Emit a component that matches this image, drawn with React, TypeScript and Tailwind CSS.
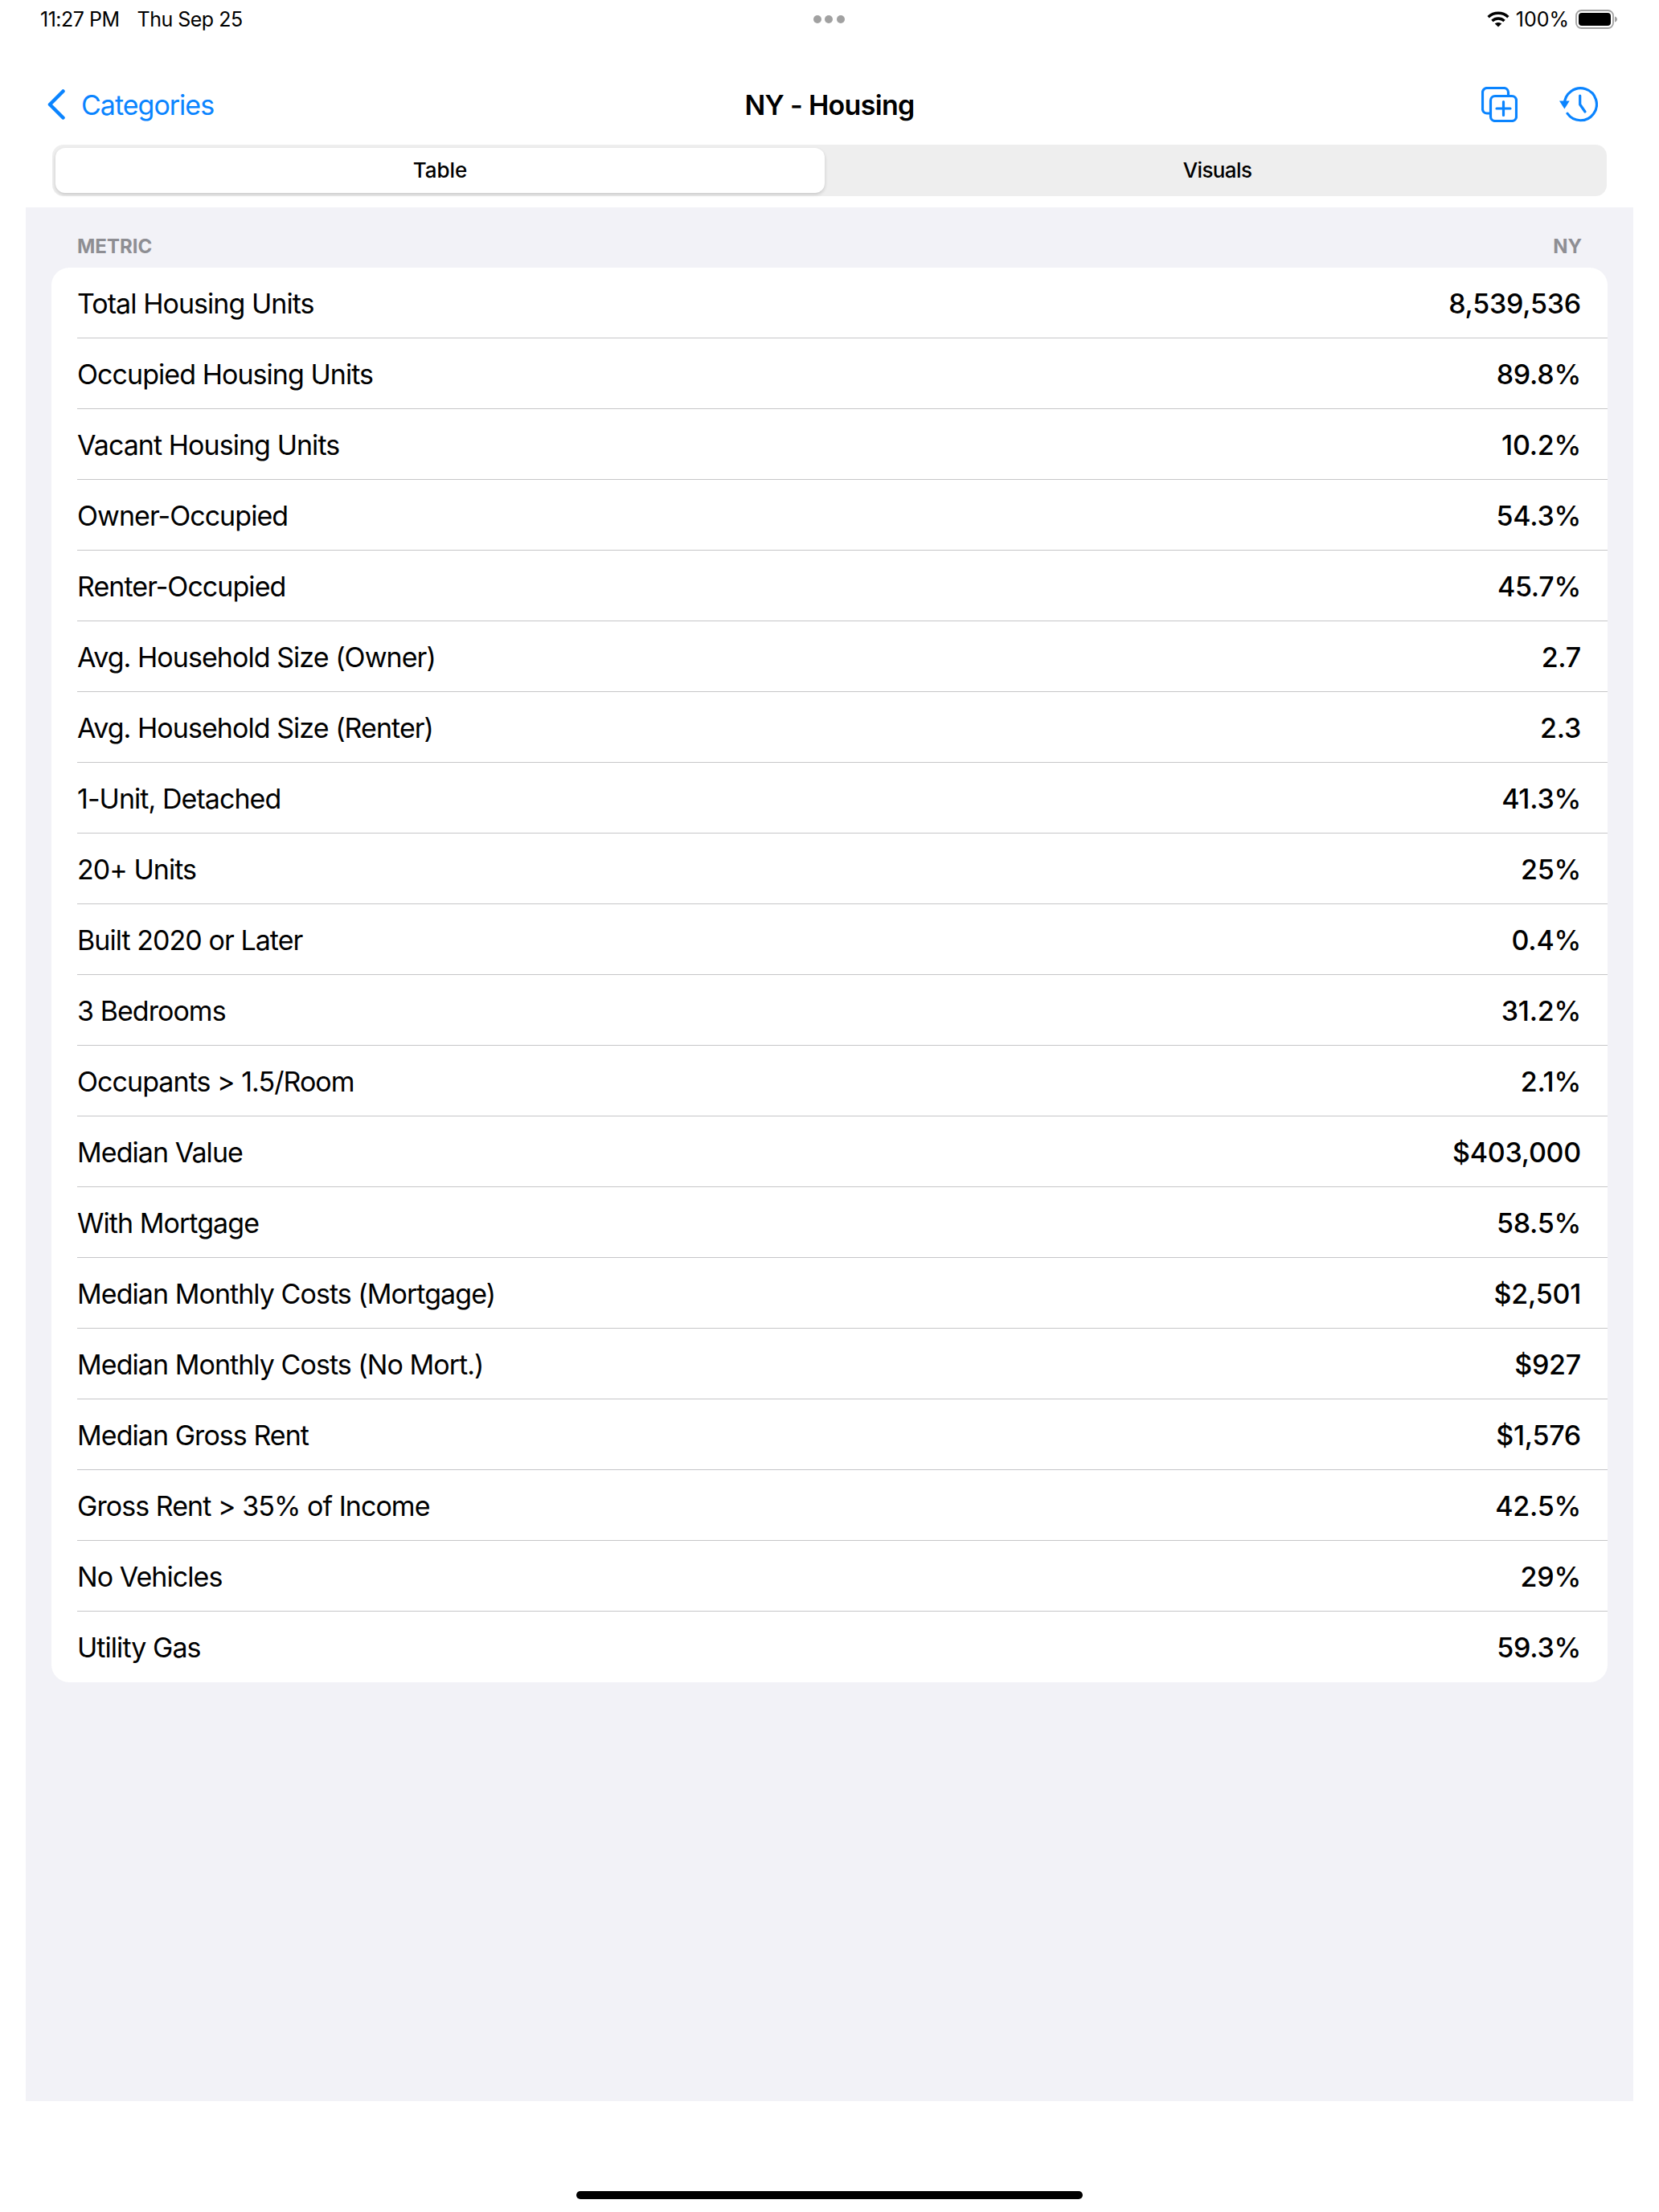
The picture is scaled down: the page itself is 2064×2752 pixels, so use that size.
const rows: [string, string][] = [
  ["Total Housing Units", "8,539,536"],
  ["Occupied Housing Units", "89.8%"],
  ["Vacant Housing Units", "10.2%"],
  ["Owner-Occupied", "54.3%"],
  ["Renter-Occupied", "45.7%"],
  ["Avg. Household Size (Owner)", "2.7"],
  ["Avg. Household Size (Renter)", "2.3"],
  ["1-Unit, Detached", "41.3%"],
  ["20+ Units", "25%"],
  ["Built 2020 or Later", "0.4%"],
  ["3 Bedrooms", "31.2%"],
  ["Occupants > 1.5/Room", "2.1%"],
  ["Median Value", "$403,000"],
  ["With Mortgage", "58.5%"],
  ["Median Monthly Costs (Mortgage)", "$2,501"],
  ["Median Monthly Costs (No Mort.)", "$927"],
  ["Median Gross Rent", "$1,576"],
  ["Gross Rent > 35% of Income", "42.5%"],
  ["No Vehicles", "29%"],
  ["Utility Gas", "59.3%"],
];

function Wifi() {
  return (
    <svg width="28" height="20" viewBox="0 0 28 20" fill="none" stroke="#000" strokeWidth="3.4">
      <path d="M1.6 7.2C8.6 .6 19.4 .6 26.4 7.2" />
      <path d="M6.4 12C10.8 8 17.2 8 21.6 12" />
      <path d="M14 19.6 L9.8 15.4 C12.2 13.4 15.8 13.4 18.2 15.4 Z" fill="#000" stroke="none" />
    </svg>
  );
}

function Battery() {
  return (
    <svg width="52" height="24" viewBox="0 0 52 24">
      <rect x="1" y="1" width="46" height="22" rx="6.5" fill="none" stroke="#a1a1a1" strokeWidth="1.8" />
      <rect x="4" y="4" width="40" height="16" rx="4" fill="#000" />
      <path d="M49 8.5c2 .6 3 2 3 3.5s-1 2.900-3 3.500z" fill="#a1a1a1" />
    </svg>
  );
}

function CopyPlus() {
  return (
    <svg width="45" height="44" viewBox="0 0 45 44" fill="none" stroke="#0a84ff" strokeWidth="3.2" strokeLinecap="round">
      <path d="M11 33H7a5.500 5.500 0 0 1-5.500-5.500V7A5.500 5.500 0 0 1 7 1.500h21A5.500 5.500 0 0 1 33.500 7v4" />
      <rect x="11.500" y="11.500" width="32" height="31" rx="5.500" />
      <path d="M27.500 18.500v17M19 27h17" />
    </svg>
  );
}

function History() {
  return (
    <svg width="48" height="44" viewBox="0 0 48 44" fill="none" stroke="#0a84ff" strokeWidth="3.2" strokeLinecap="round" strokeLinejoin="round">
      <path d="M6.400 21.700A20 20 0 1 1 10 33.200" />
      <path d="M0 17.500H12.700L6.400 27.500Z" fill="#0a84ff" stroke="none" />
      <path d="M25.700 11v11l6.300 9" />
    </svg>
  );
}

export default function App() {
  return (
    <div className="flex h-[2752px] w-[2064px] flex-col bg-white text-black" style={{ fontFamily: "Inter, 'Noto Sans', sans-serif" }}>
      <div className="flex h-12 items-center justify-between pl-[50px] pr-[52px] text-[25px] leading-none">
        <div className="flex w-[400px] items-center gap-[22px] tracking-[-0.5px]">
          <span>11:27 PM</span>
          <span>Thu Sep 25</span>
        </div>
        <div className="flex items-center gap-[4.500px]">
          <span className="h-[10px] w-[10px] rounded-full bg-[#a1a1a1]" />
          <span className="h-[10px] w-[10px] rounded-full bg-[#a1a1a1]" />
          <span className="h-[10px] w-[10px] rounded-full bg-[#a1a1a1]" />
        </div>
        <div className="flex w-[400px] items-center justify-end gap-[8px]">
          <Wifi />
          <span>100%</span>
          <Battery />
        </div>
      </div>

      <div className="mt-8 flex h-[100px] items-center px-[59px]">
        <div className="flex flex-1 items-center gap-[20px] text-[34px] tracking-[-1px] text-[#0a84ff]">
          <svg width="22" height="38" viewBox="0 0 22 38" fill="none" stroke="#0a84ff" strokeWidth="4.500" strokeLinecap="round" strokeLinejoin="round">
            <path d="M19.500 2.500L3 19l16.500 16.500" />
          </svg>
          <span>Categories</span>
        </div>
        <div className="text-[34px] font-semibold tracking-[-0.7px]">NY - Housing</div>
        <div className="flex flex-1 justify-end">
          <div className="mr-[17px] flex items-center gap-[52px]">
            <CopyPlus />
            <History />
          </div>
        </div>
      </div>

      <div className="mx-[65px] flex h-16 gap-2 rounded-[14px] bg-[#eeeeee] p-1 text-[26px] font-medium">
        <div className="flex w-[957px] shrink-0 items-center justify-center rounded-xl bg-white pb-px shadow-[0_2px_4px_rgba(0,0,0,0.16)]">Table</div>
        <div className="flex flex-1 items-center justify-center pb-px tracking-[-0.6px]">Visuals</div>
      </div>

      <div className="mx-8 mt-[14px] flex h-[2356px] flex-col bg-[#f2f2f7] px-8">
        <div className="flex h-[75px] items-center justify-between px-8 pt-[22px] text-[24px] font-bold text-[#8e8e93]">
          <span>METRIC</span>
          <span>NY</span>
        </div>
        <div className="overflow-hidden rounded-[22px] bg-white">
          {rows.map(([label, value]) => (
            <div key={label} className="ml-8 flex h-[88px] items-center justify-between border-b border-[#c6c6c8] pt-[1px] pr-[33px] text-[34px] last:border-b-0">
              <span className="tracking-[-0.95px]">{label}</span>
              <span className="font-medium tracking-[-0.25px]">{value}</span>
            </div>
          ))}
        </div>
      </div>

      <div className="flex flex-1 items-end justify-center pb-4">
        <div className="h-[10px] w-[630px] rounded-full bg-black" />
      </div>
    </div>
  );
}
